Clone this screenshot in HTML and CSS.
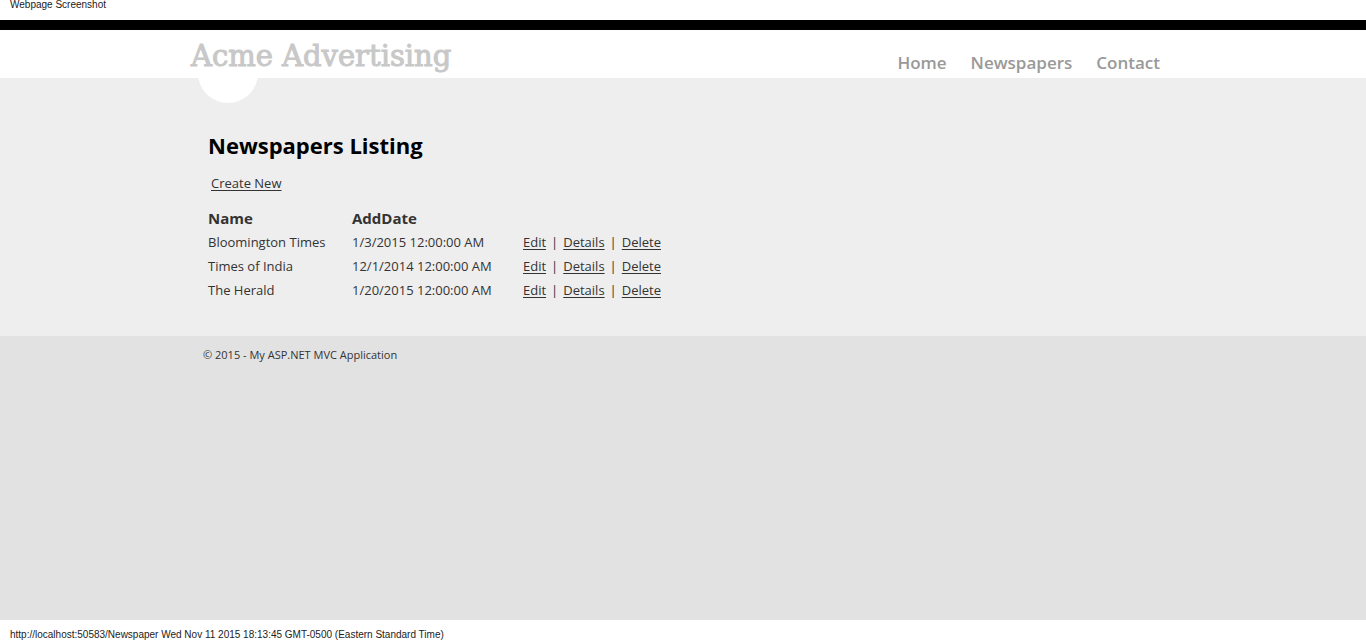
FILE: index.html
```html
<!DOCTYPE html>
<html lang="en">
<head>
<meta charset="utf-8">
<title>Newspapers Listing</title>
<link rel="stylesheet" href="styles.css">
</head>
<body>
<div class="print-line print-top">Webpage Screenshot</div>
<header class="site-header">
  <div class="wrap header-row">
    <a class="logo" href="#">Acme Advertising</a>
    <nav class="menu">
      <a href="#">Home</a>
      <a href="#">Newspapers</a>
      <a href="#">Contact</a>
    </nav>
  </div>
</header>
<main class="content">
  <div class="wrap">
    <h1 class="title">Newspapers Listing</h1>
    <p class="create"><a href="#">Create New</a></p>
    <table class="listing">
      <thead>
        <tr><th class="col-name" scope="col">Name</th><th class="col-date" scope="col">AddDate</th><td></td></tr>
      </thead>
      <tbody>
        <tr><td>Bloomington Times</td><td>1/3/2015 12:00:00 AM</td><td><div class="actions"><a href="#">Edit</a><span>|</span><a href="#">Details</a><span>|</span><a href="#">Delete</a></div></td></tr>
        <tr><td>Times of India</td><td>12/1/2014 12:00:00 AM</td><td><div class="actions"><a href="#">Edit</a><span>|</span><a href="#">Details</a><span>|</span><a href="#">Delete</a></div></td></tr>
        <tr><td>The Herald</td><td>1/20/2015 12:00:00 AM</td><td><div class="actions"><a href="#">Edit</a><span>|</span><a href="#">Details</a><span>|</span><a href="#">Delete</a></div></td></tr>
      </tbody>
    </table>
  </div>
</main>
<footer class="site-footer">
  <div class="wrap">© 2015 - My ASP.NET MVC Application</div>
</footer>
<div class="print-line print-bottom">http://localhost:50583/Newspaper Wed Nov 11 2015 18:13:45 GMT-0500 (Eastern Standard Time)</div>
</body>
</html>
```
FILE: styles.css
```css
* {
  box-sizing: border-box;
}

body {
  display: flex;
  flex-direction: column;
  min-height: 100vh;
  margin: 0;
  background: #fff;
  color: #333;
  font: 13px/24px "Open Sans", "Noto Sans", sans-serif;
}

a {
  color: #333;
  text-underline-offset: 2px;
}

.wrap {
  width: 100%;
  max-width: 960px;
  margin: 0 auto;
}

.print-line {
  height: 20px;
  padding: 0 10px;
  color: #222;
  font: 10px/10px "Liberation Sans", Arial, sans-serif;
}

.print-bottom {
  padding-top: 10px;
}

.site-header {
  border-top: 10px solid #000;
}

.header-row {
  display: flex;
  justify-content: space-between;
  align-items: flex-start;
  height: 48px;
  padding-right: 3px;
}

.logo {
  position: relative;
  margin-left: -12px;
  color: #c8c8c8;
  font: 29px/52px "Rockwell", "DejaVu Serif", serif;
  text-decoration: none;
  -webkit-text-stroke: 1px #c8c8c8;
}

.logo::before {
  content: "";
  position: absolute;
  z-index: -1;
  top: 13px;
  left: 7px;
  width: 60px;
  height: 60px;
  border-radius: 50%;
  background: #fff;
}

.menu {
  display: flex;
  gap: 24px;
  padding-top: 21px;
}

.menu a {
  color: #999;
  font-size: 17px;
  font-weight: 600;
  text-decoration: none;
}

.content {
  position: relative;
  z-index: -2;
  padding: 51px 0 34px;
  background: #eee;
}

.content .wrap {
  padding-left: 5px;
}

.title {
  margin: 0;
  color: #000;
  font-size: 22px;
  font-weight: 700;
  line-height: 32px;
}

.create {
  margin: 10px 3px 11px;
}

.listing {
  border-collapse: collapse;
}

.listing th,
.listing td {
  padding: 0;
  text-align: left;
}

.listing th {
  font-size: 15px;
}

.col-name {
  width: 144px;
}

.col-date {
  width: 171px;
}

.actions {
  display: flex;
  gap: 5px;
}

.site-footer {
  flex: 1;
  padding: 7px 0;
  background: #e2e2e2;
  font-size: 11px;
}
```
